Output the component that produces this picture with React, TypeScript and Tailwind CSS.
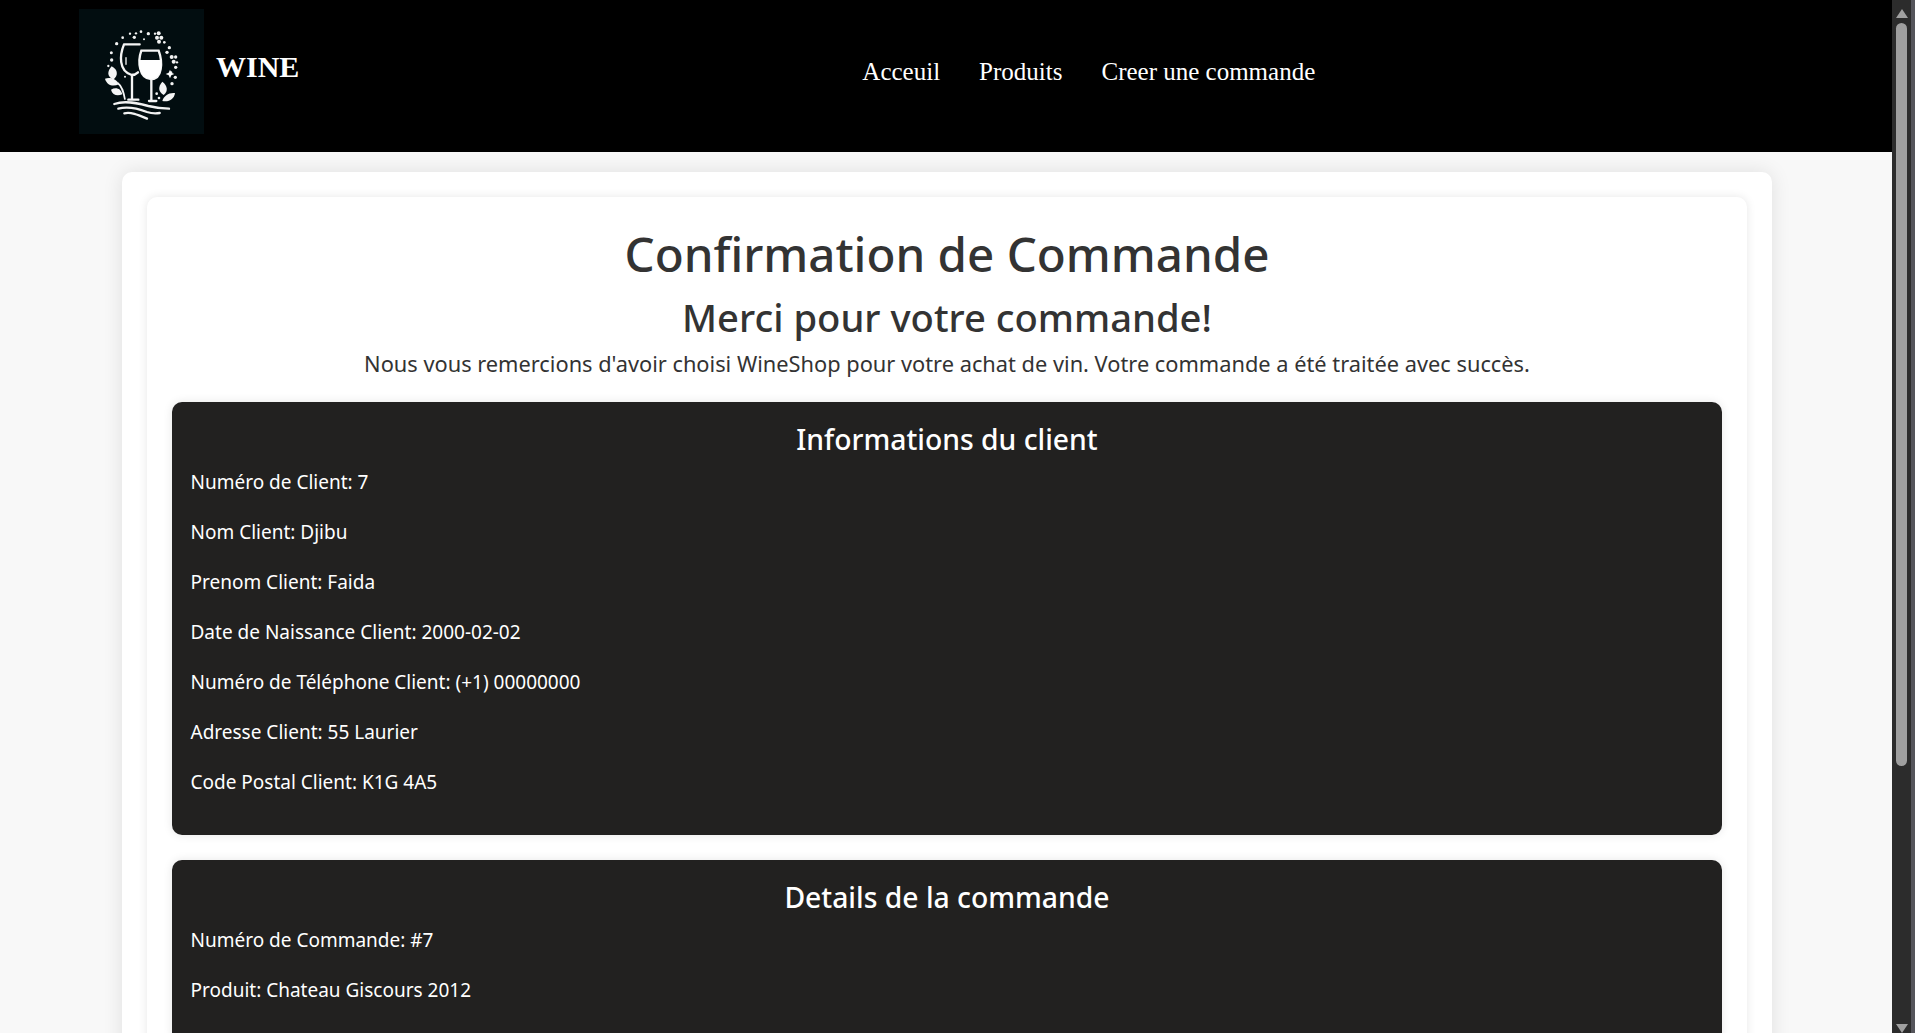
const clientInfo = [
  "Numéro de Client: 7",
  "Nom Client: Djibu",
  "Prenom Client: Faida",
  "Date de Naissance Client: 2000-02-02",
  "Numéro de Téléphone Client: (+1) 00000000",
  "Adresse Client: 55 Laurier",
  "Code Postal Client: K1G 4A5",
];

const orderInfo = ["Numéro de Commande: #7", "Produit: Chateau Giscours 2012"];

const dots = [
  [125, 116, 5], [143, 98, 4], [165, 86, 3.5], [178, 97, 5], [183, 85, 3.5], [198, 80, 4], [207, 103, 3],
  [220, 86, 5], [240, 86, 3.5], [251, 85, 6], [246, 98, 6], [259, 98, 6], [252, 110, 6], [268, 112, 4],
  [283, 128, 5], [276, 142, 5], [290, 156, 6], [302, 156, 5], [296, 170, 6], [306, 172, 3.5], [302, 187, 5],
  [288, 203, 4], [301, 217, 5], [291, 236, 5], [109, 143, 4.5], [110, 165, 5], [100, 183, 3.5], [150, 215, 3],
];

function Logo() {
  return (
    <div className="h-[125px] w-[125px] shrink-0 bg-[#020d10]">
      <svg viewBox="12 12 375 375" className="h-full w-full">
        {dots.map(([cx, cy, r], i) => (
          <circle key={i} cx={cx} cy={cy} r={r} fill="#f2f2f2" />
        ))}
        <path d="M285 194 L289 203 L298 207 L289 211 L285 220 L281 211 L272 207 L281 203 Z" fill="#fff" />
        {/* left glass */}
        <g fill="none" stroke="#f5f5f5" strokeLinecap="round">
          <path d="M147 118 H194 M147 118 C134 150 130 198 170 210 C178 210 184 207 189 202" strokeWidth="7" />
          <path d="M171 210 V280 M160 284 H190" strokeWidth="7" />
          <path d="M153 158 V178" strokeWidth="4" />
          <path d="M229 224 V284 M222 288 H244" strokeWidth="7" />
          <path d="M199 137 H251 C263 170 263 222 228 222 C193 222 187 170 199 137 Z" strokeWidth="7" />
        </g>
        {/* right glass fill */}
        <path d="M192 165 H259 C262 196 252 222 228 222 C202 222 191 196 192 165 Z" fill="#fff" />
        {/* waves */}
        <g fill="none" stroke="#f2f2f2" strokeWidth="7" strokeLinecap="round">
          <path d="M118 297 C150 285 190 295 220 303 C245 309 262 311 282 311" />
          <path d="M130 311 C160 303 190 311 216 321 C228 325 240 326 254 324" />
          <path d="M148 325 C168 320 190 330 216 341" />
        </g>
        {/* leaves */}
        <g fill="#f5f5f5">
          <path d="M110 184 C130 194 130 214 114 224 C96 214 96 200 110 184 Z" />
          <path d="M90 221 C108 215 126 224 132 238 C114 246 96 242 90 221 Z" />
          <path d="M108 254 C122 245 138 250 142 268 C126 274 112 270 108 254 Z" />
          <path d="M262 230 C278 242 280 258 266 270 C250 260 248 246 262 230 Z" />
          <path d="M300 264 C298 282 282 292 262 288 C266 272 282 262 300 264 Z" />
        </g>
        <path d="M128 234 C142 244 146 262 150 284" fill="none" stroke="#f5f5f5" strokeWidth="5" />
        <circle cx="245" cy="266" r="4" fill="#f5f5f5" />
        <circle cx="252" cy="279" r="4" fill="#f5f5f5" />
      </svg>
    </div>
  );
}

function InfoCard({ title, lines }: { title: string; lines: string[] }) {
  return (
    <section className="mb-[25px] rounded-[10px] bg-[#222120] px-[18.5px] pt-[14px] pb-[16px] text-white shadow-[0_0_10px_rgba(0,0,0,0.1)]">
      <h3 className="mb-[7px] text-center text-[28.3px] leading-[46px] font-medium">{title}</h3>
      {lines.map((line) => (
        <p key={line} className="mb-[24px] text-[19px] leading-[26px]">
          {line}
        </p>
      ))}
    </section>
  );
}

function Scrollbar() {
  return (
    <div className="flex h-full w-[23px] shrink-0">
      <div className="flex w-[19px] flex-col items-center justify-between bg-[#2c2c2c] pt-[9px] pb-0">
        <div className="h-0 w-0 border-x-[6px] border-b-[9px] border-x-transparent border-b-[#a0a0a0]" />
        <div className="mt-[5px] mb-[258px] w-[11px] flex-1 rounded-full bg-[#9f9f9f]" />
        <div className="h-0 w-0 border-x-[6px] border-t-[9px] border-x-transparent border-t-[#a0a0a0]" />
      </div>
      <div className="w-[4px] bg-[#55555b]" />
    </div>
  );
}

export default function App() {
  return (
    <div className="flex h-[1033px] overflow-hidden bg-[#f8f8f8] font-['Noto_Sans',sans-serif]">
      <div className="min-w-0 flex-1 overflow-hidden">
        <header className="flex h-[152px] items-start bg-black pt-[9px] pl-[79px] font-['Liberation_Serif',serif] text-white">
          <Logo />
          <span className="mt-[40px] ml-[12px] text-[30px] leading-[36px] font-bold">WINE</span>
          <nav className="mt-[45px] ml-[563px] flex gap-[39px] text-[25px] leading-[36px]">
            <a>Acceuil</a>
            <a>Produits</a>
            <a>Creer une commande</a>
          </nav>
        </header>
        <div className="mt-[20px] mr-[120px] ml-[122px] rounded-[10px] bg-white p-[25px] shadow-[0_0_20px_rgba(0,0,0,0.1)]">
          <div className="rounded-[10px] bg-white p-[25px] shadow-[0_0_10px_rgba(0,0,0,0.1)]">
            <h1 className="text-center text-[47.5px] leading-[64px] font-medium text-[#333333]">
              Confirmation de Commande
            </h1>
            <h2 className="text-center text-[38.2px] leading-[62px] font-medium text-[#333333]">
              Merci pour votre commande!
            </h2>
            <p className="mt-[2px] mb-[24px] text-center text-[21.8px] leading-[28px] text-[#333333]">
              Nous vous remercions d'avoir choisi WineShop pour votre achat de vin. Votre commande a été traitée avec
              succès.
            </p>
            <InfoCard title="Informations du client" lines={clientInfo} />
            <InfoCard title="Details de la commande" lines={orderInfo} />
          </div>
        </div>
      </div>
      <Scrollbar />
    </div>
  );
}
